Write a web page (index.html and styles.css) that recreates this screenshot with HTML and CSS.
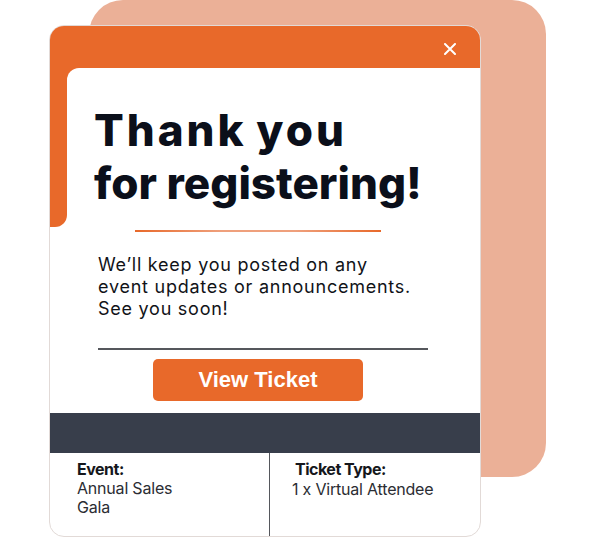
FILE: index.html
```html
<!DOCTYPE html>
<html lang="en">
<head>
<meta charset="utf-8">
<title>Thank you for registering</title>
<link rel="stylesheet" href="styles.css">
</head>
<body>
<div class="stage">
  <div class="backdrop"></div>
  <div class="card">
    <div class="card-header">
      <button class="close" aria-label="Close">
        <svg width="12" height="12" viewBox="0 0 12 12"><path d="M1 1 L11 11 M11 1 L1 11" stroke="#fff" stroke-width="2" stroke-linecap="round"/></svg>
      </button>
    </div>
    <div class="card-body">
      <div class="strip"></div>
      <div class="panel">
        <h1 class="headline"><span class="headline-wide">Thank you</span><br>for registering!</h1>
        <div class="accent-rule"></div>
        <p class="message">We’ll keep you posted on any<br>event updates or announcements.<br>See you soon!</p>
        <div class="gray-rule"></div>
        <button class="ticket-btn">View Ticket</button>
      </div>
    </div>
    <div class="band"></div>
    <div class="details">
      <div class="detail detail-event">
        <div class="label">Event:</div>
        <div class="value">Annual Sales<br>Gala</div>
      </div>
      <div class="detail detail-ticket">
        <div class="label">Ticket Type:</div>
        <div class="value value-ticket">1 x Virtual Attendee</div>
      </div>
    </div>
  </div>
</div>
</body>
</html>
```

FILE: styles.css
```css
* { box-sizing: border-box; }
html, body { margin: 0; padding: 0; background: #ffffff; }
body { font-family: Inter, "Noto Sans", sans-serif; width: 597px; height: 540px; overflow: hidden; }

.stage {
  display: grid;
  width: 597px;
  height: 540px;
}
.backdrop, .card { grid-area: 1 / 1; justify-self: start; align-self: start; }

.backdrop {
  margin-left: 89px;
  width: 457px;
  height: 477px;
  background: #ebb097;
  border-radius: 34px;
}

.card {
  margin-left: 49px;
  margin-top: 25px;
  width: 432px;
  height: 512px;
  background: #ffffff;
  border: 1px solid #e2dad7;
  border-radius: 15px;
  overflow: hidden;
  display: flex;
  flex-direction: column;
}

.card-header {
  height: 42px;
  background: #e8692a;
  display: flex;
  justify-content: flex-end;
  align-items: flex-start;
  padding: 17px 24px 0 0;
}
.close {
  border: 0;
  background: none;
  padding: 0;
  width: 12px;
  height: 12px;
  display: block;
}
.close svg { display: block; }

.card-body {
  display: flex;
  align-items: flex-start;
  background: linear-gradient(#e8692a, #e8692a) top left / 100% 20px no-repeat;
}
.strip {
  width: 17px;
  height: 159px;
  background: #e8692a;
  border-bottom-right-radius: 12px;
  flex: none;
}
.panel {
  flex: 1;
  background: #ffffff;
  border-top-left-radius: 12px;
  padding: 36px 0 12px 0;
  display: flex;
  flex-direction: column;
  align-items: flex-start;
}

.headline {
  margin: 0 0 0 27px;
  font-family: Inter, sans-serif;
  font-weight: 800;
  font-size: 44px;
  line-height: 53px;
  letter-spacing: 0;
  color: #0b0f1a;
}
.headline-wide { letter-spacing: 3px; word-spacing: -3px; }
.accent-rule {
  margin: 20px 0 0 68px;
  width: 246px;
  height: 2px;
  background: linear-gradient(90deg, #e8692a 0%, #efa07c 35%, #efa07c 65%, #e8692a 100%);
}
.message {
  margin: 22px 0 0 31px;
  font-family: Inter, sans-serif;
  font-size: 18px;
  line-height: 22px;
  letter-spacing: 0.75px;
  color: #111318;
}
.gray-rule {
  margin: 28px 0 0 31px;
  width: 330px;
  height: 2px;
  background: #55575c;
}
.ticket-btn {
  margin: 9px 0 0 86px;
  width: 210px;
  height: 42px;
  border: 0;
  border-radius: 5px;
  background: #e8692a;
  color: #ffffff;
  font-family: "Liberation Sans", Arial, sans-serif;
  font-weight: 700;
  font-size: 22px;
  padding: 0;
}

.band {
  height: 40px;
  background: #383e4b;
  flex: none;
}

.details {
  flex: 1;
  display: grid;
  grid-template-columns: 219px 1fr;
}
.detail { padding-top: 7px; }
.detail-event { padding-left: 27px; }
.detail-ticket { padding-left: 22px; border-left: 1px solid #55575c; }

.label {
  font-family: Inter, sans-serif;
  font-weight: 700;
  font-size: 16px;
  line-height: 19px;
  letter-spacing: -0.5px;
  color: #15171c;
}
.detail-ticket .label { margin-left: 3px; }
.value {
  font-family: Inter, sans-serif;
  font-size: 16px;
  line-height: 19px;
  letter-spacing: -0.2px;
  color: #2b2d33;
}
.value-ticket { margin-top: 1px; }
```
